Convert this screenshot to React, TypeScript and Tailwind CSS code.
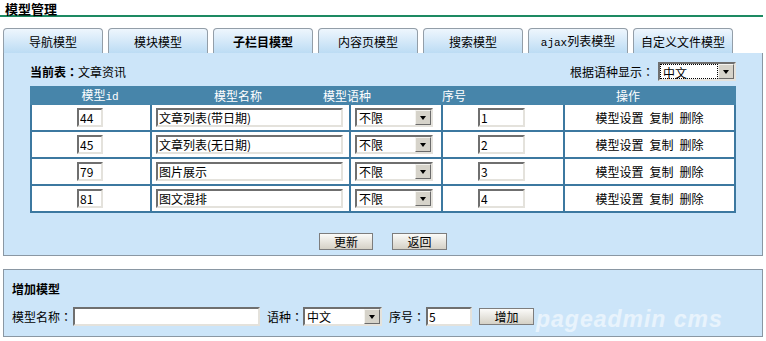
import React from "react";

const tabs = ["导航模型", "模块模型", "子栏目模型", "内容页模型", "搜索模型", "ajax列表模型", "自定义文件模型"];

const rows = [
  { id: "44", name: "文章列表(带日期)", order: "1" },
  { id: "45", name: "文章列表(无日期)", order: "2" },
  { id: "79", name: "图片展示", order: "3" },
  { id: "81", name: "图文混排", order: "4" },
];

// centred full-width colon, as in the reference
function Colon() {
  return <span className="font-['Noto_Sans_CJK_TC',sans-serif]">：</span>;
}

function TextBox({ value, className }: { value: string; className: string }) {
  return (
    <input
      readOnly
      value={value}
      className={
        "h-[19px] bg-white border-2 border-t-[#6f6f6f] border-l-[#6f6f6f] border-b-[#e4e2dc] border-r-[#e4e2dc] px-[1px] text-[12px] leading-[15px] outline-none " +
        className
      }
    />
  );
}

function Arrow() {
  return (
    <div className="w-[16px] h-[15px] bg-[#d6d3ca] border border-t-[#f4f3ef] border-l-[#f4f3ef] border-b-[#6b6b6b] border-r-[#6b6b6b] flex items-center justify-center">
      <div className="w-0 h-0 border-l-[3.5px] border-r-[3.5px] border-t-[4px] border-l-transparent border-r-transparent border-t-black" />
    </div>
  );
}

function Select({ value, className, focus }: { value: string; className: string; focus?: boolean }) {
  return (
    <div
      className={
        "h-[19px] bg-white border-2 border-t-[#6f6f6f] border-l-[#6f6f6f] border-b-[#e4e2dc] border-r-[#e4e2dc] flex items-center " +
        className
      }
    >
      <div className={"flex-1 h-[15px] leading-[15px] pl-[2px] " + (focus ? "border border-dotted border-black leading-[13px]" : "")}>{value}</div>
      <Arrow />
    </div>
  );
}

function Button({ label, className }: { label: string; className: string }) {
  return (
    <div
      className={
        "h-[17px] flex items-center justify-center border border-[#7d7d7d] bg-gradient-to-b from-[#fbfbf9] to-[#d5d1c6] leading-[15px] " +
        className
      }
    >
      {label}
    </div>
  );
}

export default function App() {
  return (
    <div className="w-[766px] h-[341px] bg-white text-black text-[12px] relative overflow-hidden font-['Noto_Sans_CJK_SC','Liberation_Sans',sans-serif]">
      <div className="h-[15px] pl-[5px] pt-[2px] text-[13px] font-bold leading-[13px]">模型管理</div>
      <div className="h-[2px] w-[763px] bg-[#1d8a62]" />

      <div className="flex gap-[5px] pl-[3px] mt-[11px]">
        {tabs.map((t, i) => (
          <div
            key={t}
            className={
              "w-[100px] h-[25px] rounded-t-[4px] border border-b-0 border-[#939ea8] bg-gradient-to-b from-[#eef6fd] to-[#bcdcf4] flex items-center justify-center pt-[1px] " +
              (i === 2 ? "font-bold" : "")
            }
          >
            {i === 5 ? (
              <span>
                <span className="font-['Liberation_Mono',monospace] text-[11px]">ajax</span>列表模型
              </span>
            ) : (
              t
            )}
          </div>
        ))}
      </div>

      {/* main panel */}
      <div className="ml-[3px] w-[760px] h-[203px] border border-t-0 border-[#8a97a3] bg-[#cce5f9] pt-[9px]">
        <div className="flex items-center justify-between h-[19px] pl-[26px] pr-[26px]">
          <div>
            <span className="font-bold">
              当前表<Colon />
            </span>
            文章资讯
          </div>
          <div className="flex items-center gap-[4px]">
            <span>
              根据语种显示<Colon />
            </span>
            <Select value="中文" className="w-[78px]" focus />
          </div>
        </div>

        <div className="ml-[26px] w-[706px] mt-[5px] bg-[#3c78a0] px-[2px] pb-[2px]">
          <div className="-mx-[2px] h-[19px] bg-[#4785aa] text-white flex items-center leading-[19px]">
            <div className="w-[140px] text-center">
              模型<span className="font-['Liberation_Mono',monospace] text-[11px]">id</span>
            </div>
            <div className="w-[136px] text-center">模型名称</div>
            <div className="w-[82px] text-center">模型语种</div>
            <div className="w-[132px] text-center">序号</div>
            <div className="w-[216px] text-center">操作</div>
          </div>
          <div className="grid grid-cols-[118px_197px_90px_120px_169px] gap-[2px]">
            {rows.map((r) => (
              <React.Fragment key={r.id}>
                <div className="h-[25px] bg-white flex items-center pl-[45px]">
                  <TextBox value={r.id} className="w-[26px]" />
                </div>
                <div className="h-[25px] bg-white flex items-center pl-[4px]">
                  <TextBox value={r.name} className="w-[187px]" />
                </div>
                <div className="h-[25px] bg-white flex items-center pl-[4px]">
                  <Select value="不限" className="w-[78px]" />
                </div>
                <div className="h-[25px] bg-white flex items-center pl-[35px]">
                  <TextBox value={r.order} className="w-[47px]" />
                </div>
                <div className="h-[25px] bg-white flex items-center justify-center gap-[6px]">
                  <span>模型设置</span>
                  <span>复制</span>
                  <span>删除</span>
                </div>
              </React.Fragment>
            ))}
          </div>
        </div>

        <div className="flex justify-center gap-[19px] mt-[20px]">
          <Button label="更新" className="w-[54px]" />
          <Button label="返回" className="w-[55px]" />
        </div>
      </div>

      {/* add panel */}
      <div className="relative ml-[3px] mt-[13px] w-[760px] h-[68px] border border-[#8a97a3] bg-[#cce5f9] pl-[8px] pt-[12px]">
        <div className="font-bold leading-[14px] h-[14px]">增加模型</div>
        <div className="flex items-center h-[19px] mt-[11px]">
          <span>
            模型名称<Colon />
          </span>
          <TextBox value="" className="w-[187px] ml-[1px]" />
          <span className="ml-[7px]">
            语种<Colon />
          </span>
          <Select value="中文" className="w-[79px]" />
          <span className="ml-[7px]">
            序号<Colon />
          </span>
          <TextBox value="5" className="w-[46px] ml-[1px]" />
          <Button label="增加" className="w-[55px] ml-[7px]" />
        </div>
        <div className="absolute left-[532px] top-[36px] text-[23px] leading-[26px] font-bold italic text-white/55 tracking-[1px] font-['Liberation_Sans',sans-serif] select-none">
          pageadmin cms
        </div>
      </div>
    </div>
  );
}
